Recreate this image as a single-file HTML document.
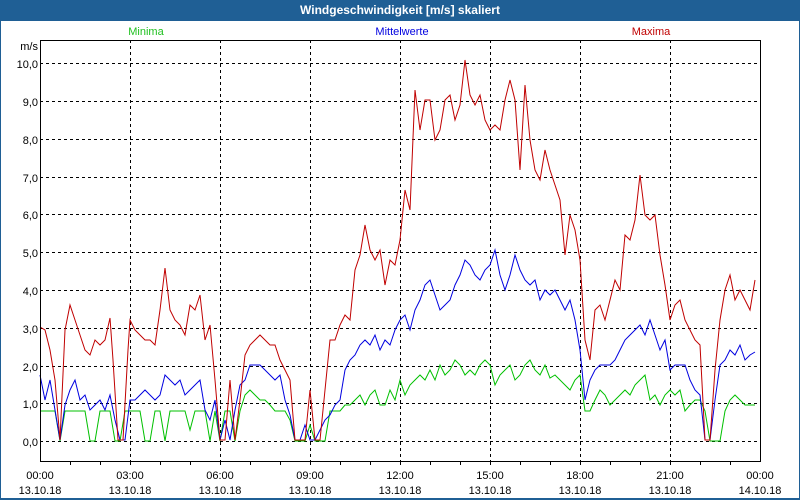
<!DOCTYPE html>
<html><head><meta charset="utf-8"><style>
html,body{margin:0;padding:0;width:800px;height:500px;overflow:hidden;background:#1f5f95}
#w{position:absolute;left:1px;top:21px;width:798px;height:477px;background:#fff}
#t{position:absolute;left:0;top:0;width:800px;height:21px;color:#fff;font:bold 12px "Liberation Sans",sans-serif;text-align:center;line-height:21px}
svg{position:absolute;left:0;top:0}
text{font-family:"Liberation Sans",sans-serif;font-size:11px}
</style></head><body>
<div id="t">Windgeschwindigkeit [m/s] skaliert</div>
<div id="w"></div>
<svg width="800" height="500" viewBox="0 0 800 500">
<g stroke="#000" stroke-dasharray="3,3" stroke-width="1">
<line x1="40" y1="63.5" x2="760" y2="63.5"/><line x1="40" y1="101.5" x2="760" y2="101.5"/><line x1="40" y1="139.5" x2="760" y2="139.5"/><line x1="40" y1="177.5" x2="760" y2="177.5"/><line x1="40" y1="214.5" x2="760" y2="214.5"/><line x1="40" y1="252.5" x2="760" y2="252.5"/><line x1="40" y1="290.5" x2="760" y2="290.5"/><line x1="40" y1="328.5" x2="760" y2="328.5"/><line x1="40" y1="366.5" x2="760" y2="366.5"/><line x1="40" y1="403.5" x2="760" y2="403.5"/><line x1="40" y1="441.5" x2="760" y2="441.5"/>
<line x1="130.5" y1="40" x2="130.5" y2="461"/><line x1="220.5" y1="40" x2="220.5" y2="461"/><line x1="310.5" y1="40" x2="310.5" y2="461"/><line x1="400.5" y1="40" x2="400.5" y2="461"/><line x1="490.5" y1="40" x2="490.5" y2="461"/><line x1="580.5" y1="40" x2="580.5" y2="461"/><line x1="670.5" y1="40" x2="670.5" y2="461"/>
</g>
<g stroke="#000" stroke-width="1">
<line x1="70.5" y1="461" x2="70.5" y2="465"/><line x1="100.5" y1="461" x2="100.5" y2="465"/><line x1="160.5" y1="461" x2="160.5" y2="465"/><line x1="190.5" y1="461" x2="190.5" y2="465"/><line x1="250.5" y1="461" x2="250.5" y2="465"/><line x1="280.5" y1="461" x2="280.5" y2="465"/><line x1="340.5" y1="461" x2="340.5" y2="465"/><line x1="370.5" y1="461" x2="370.5" y2="465"/><line x1="430.5" y1="461" x2="430.5" y2="465"/><line x1="460.5" y1="461" x2="460.5" y2="465"/><line x1="520.5" y1="461" x2="520.5" y2="465"/><line x1="550.5" y1="461" x2="550.5" y2="465"/><line x1="610.5" y1="461" x2="610.5" y2="465"/><line x1="640.5" y1="461" x2="640.5" y2="465"/><line x1="700.5" y1="461" x2="700.5" y2="465"/><line x1="730.5" y1="461" x2="730.5" y2="465"/>
<line x1="130.5" y1="461" x2="130.5" y2="465"/><line x1="220.5" y1="461" x2="220.5" y2="465"/><line x1="310.5" y1="461" x2="310.5" y2="465"/><line x1="400.5" y1="461" x2="400.5" y2="465"/><line x1="490.5" y1="461" x2="490.5" y2="465"/><line x1="580.5" y1="461" x2="580.5" y2="465"/><line x1="670.5" y1="461" x2="670.5" y2="465"/>
</g>
<polyline fill="none" stroke="#00c000" stroke-width="1" points="40,411 45,411 50,411 55,411 60,441 65,411 70,411 75,411 80,411 85,411 90,441 95,441 100,411 105,411 110,411 115,441 120,441 125,411 130,411 135,411 140,411 145,441 150,441 155,411 160,411 165,441 170,411 175,411 180,411 185,411 190,430 195,411 200,411 205,411 210,441 215,411 220,441 225,411 230,411 235,441 240,411 245,395 250,390 255,395 260,400 265,400 270,405 275,411 280,411 285,411 290,420 295,441 300,441 305,441 310,425 315,441 320,441 325,441 330,411 335,411 340,411 345,405 350,405 355,400 360,395 365,405 370,395 375,390 380,405 385,405 390,390 395,400 400,380 405,395 410,385 415,380 420,375 425,380 430,370 435,380 440,365 445,375 450,370 455,360 460,365 465,375 470,370 475,375 480,365 485,360 490,365 495,385 500,375 505,370 510,365 515,380 520,375 525,365 530,360 535,370 540,375 545,365 550,378 555,375 560,380 565,385 570,390 575,380 580,375 585,411 590,411 595,400 600,390 605,395 610,405 615,400 620,395 625,390 630,395 635,385 640,380 645,375 650,400 655,395 660,405 665,395 670,390 675,395 680,390 685,411 690,405 695,400 700,400 705,411 710,441 715,441 720,441 725,411 730,400 735,395 740,400 745,405 750,405 755,405"/>
<polyline fill="none" stroke="#0000e0" stroke-width="1" points="40,375 45,400 50,380 55,410 60,440 65,405 70,390 75,380 80,400 85,395 90,410 95,405 100,400 105,410 110,395 115,420 120,440 125,440 130,400 135,400 140,395 145,390 150,395 155,400 160,395 165,375 170,380 175,385 180,380 185,395 190,390 195,385 200,380 205,410 210,420 215,400 220,440 225,420 230,440 235,410 240,385 245,380 250,365 255,365 260,365 265,370 270,375 275,380 280,375 285,400 290,415 295,440 300,440 305,425 310,440 315,440 320,430 325,420 330,415 335,405 340,400 345,370 350,360 355,355 360,345 365,340 370,345 375,335 380,350 385,340 390,345 395,330 400,320 405,315 410,330 415,310 420,300 425,285 430,280 435,295 440,310 445,305 450,300 455,285 460,275 465,260 470,265 475,275 480,280 485,270 490,265 495,250 500,275 505,290 510,275 515,255 520,270 525,280 530,285 535,280 540,300 545,290 550,295 555,290 560,300 565,310 570,300 575,320 580,350 585,400 590,380 595,370 600,365 605,365 610,365 615,360 620,350 625,340 630,335 635,330 640,325 645,335 650,320 655,335 660,350 665,340 670,370 675,365 680,365 685,365 690,380 695,390 700,395 705,440 710,440 715,400 720,365 725,360 730,350 735,355 740,345 745,360 750,355 755,352"/>
<polyline fill="none" stroke="#c00000" stroke-width="1" points="40,327 45,330 50,350 55,380 60,440 65,330 70,305 75,320 80,335 85,350 90,355 95,340 100,345 105,340 110,318 113,360 118,440 123,440 128,350 130,320 135,330 140,335 145,340 150,340 155,345 160,310 165,268 170,310 175,320 180,325 185,335 190,305 195,310 200,295 205,340 210,325 215,380 220,440 225,440 230,380 235,440 240,400 245,355 250,345 255,340 260,335 265,340 270,345 275,345 280,360 285,370 290,380 295,440 300,440 305,440 310,390 315,440 320,440 325,390 330,340 335,340 340,325 345,315 350,320 355,270 360,255 365,225 370,250 375,260 380,250 385,285 390,260 395,265 400,240 405,190 410,210 415,90 420,130 425,100 430,100 435,140 440,130 445,100 450,95 455,120 460,105 465,60 470,95 475,105 480,95 485,120 490,130 495,125 500,130 505,100 510,80 515,100 520,170 525,85 530,140 535,170 540,180 545,150 550,170 555,185 560,200 565,255 570,215 575,230 580,260 585,340 590,360 595,310 600,305 605,320 610,300 615,280 620,290 625,235 630,240 635,220 640,175 645,215 650,220 655,215 660,255 665,285 670,320 675,305 680,300 685,320 690,330 695,340 700,345 705,440 710,440 715,370 720,320 725,290 730,275 735,300 740,290 745,300 750,310 755,280"/>
<polyline fill="none" stroke="#000" stroke-width="1" points="40.5,40 40.5,461.5 760.5,461.5 760.5,40"/>
<line x1="40" y1="40.5" x2="761" y2="40.5" stroke="#000"/>
<g fill="#000" text-anchor="end">
<text x="38" y="50">m/s</text>
<text x="38" y="68">10,0</text><text x="38" y="106">9,0</text><text x="38" y="144">8,0</text><text x="38" y="182">7,0</text><text x="38" y="219">6,0</text><text x="38" y="257">5,0</text><text x="38" y="295">4,0</text><text x="38" y="333">3,0</text><text x="38" y="371">2,0</text><text x="38" y="408">1,0</text><text x="38" y="446">0,0</text>
</g>
<g fill="#000" text-anchor="middle">
<text x="40" y="479">00:00</text><text x="130" y="479">03:00</text><text x="220" y="479">06:00</text><text x="310" y="479">09:00</text><text x="400" y="479">12:00</text><text x="490" y="479">15:00</text><text x="580" y="479">18:00</text><text x="670" y="479">21:00</text><text x="760" y="479">00:00</text>
<text x="40" y="494">13.10.18</text><text x="130" y="494">13.10.18</text><text x="220" y="494">13.10.18</text><text x="310" y="494">13.10.18</text><text x="400" y="494">13.10.18</text><text x="490" y="494">13.10.18</text><text x="580" y="494">13.10.18</text><text x="670" y="494">13.10.18</text><text x="760" y="494">14.10.18</text>
<text x="146" y="35" fill="#20c020">Minima</text>
<text x="402" y="35" fill="#0000e0">Mittelwerte</text>
<text x="651" y="35" fill="#c00000">Maxima</text>
</g>
</svg>
</body></html>
